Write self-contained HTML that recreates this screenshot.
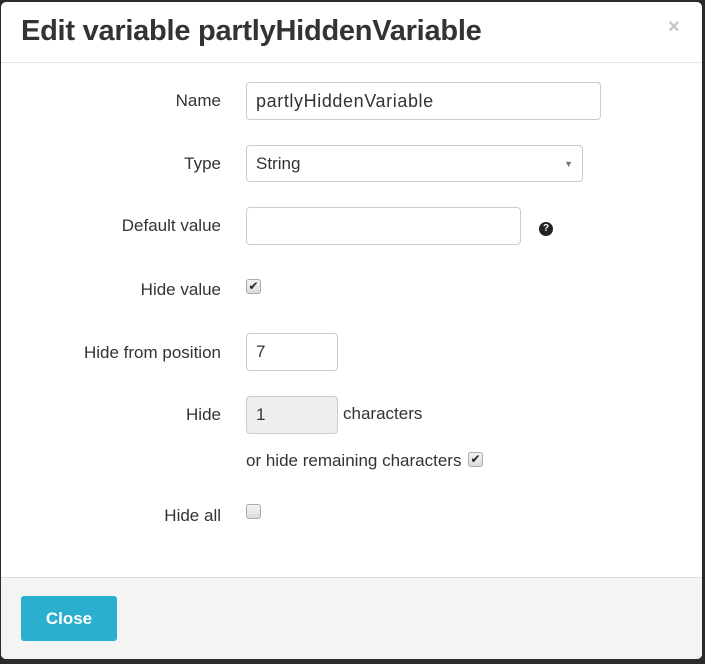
<!DOCTYPE html>
<html><head><style>
*{box-sizing:border-box;margin:0;padding:0}
body{width:705px;height:664px;background:#2b2b2b;font-family:"Liberation Sans",sans-serif;color:#333;position:relative;overflow:hidden}
.modal{position:absolute;left:1px;top:2px;width:701px;height:657px;background:#fff;border-radius:5px;overflow:hidden}
.abs{position:absolute}
.title{left:20px;top:13px;font-size:29px;font-weight:bold;color:#333;letter-spacing:-0.25px}
.x{left:667px;top:14px;font-size:20px;color:#c4c4c4;font-weight:bold}
.hr{left:0;top:60px;width:701px;height:1px;background:#e5e5e5}
.lab{font-size:17px;text-align:right;width:220px;left:0}
.inp{border:1px solid #ccc;border-radius:4px;background:#fff;font-size:16px;padding:0 9px;display:flex;align-items:center}
.cb{width:15px;height:15px;border:1px solid #aaa;border-radius:3px;background:linear-gradient(#f4f4f4,#dcdcdc);font-size:12px;line-height:13px;text-align:center;color:#222}
.foot{left:0;top:575px;width:701px;height:82px;background:#f4f4f4;border-top:1px solid #ddd}
.btn{left:20px;top:594px;width:96px;height:45px;background:#2aafcf;border-radius:3px;color:#fff;font-weight:bold;font-size:17px;text-align:center;line-height:45px}
</style></head><body>
<div class="modal">
<div class="abs title">Edit variable partlyHiddenVariable</div>
<div class="abs x">×</div>
<div class="abs hr"></div>
<div class="abs lab" style="top:89px">Name</div>
<div class="abs inp" style="left:245px;top:80px;width:355px;height:38px;font-size:18px;letter-spacing:0.6px">partlyHiddenVariable</div>
<div class="abs lab" style="top:152px">Type</div>
<div class="abs inp" style="left:245px;top:143px;width:337px;height:37px;font-size:17px">String<span style="position:absolute;right:9px;top:13px;font-size:9px;color:#777">▼</span></div>
<div class="abs lab" style="top:214px">Default value</div>
<div class="abs inp" style="left:245px;top:205px;width:275px;height:38px"></div>
<div class="abs" style="left:538px;top:220px;width:14px;height:14px;border-radius:50%;background:#222;color:#fff;font-size:10px;font-weight:bold;text-align:center;line-height:14px">?</div>
<div class="abs lab" style="top:278px">Hide value</div>
<div class="abs cb" style="left:245px;top:277px">✔</div>
<div class="abs lab" style="top:341px">Hide from position</div>
<div class="abs inp" style="left:245px;top:331px;width:92px;height:38px;font-size:17px">7</div>
<div class="abs lab" style="top:403px">Hide</div>
<div class="abs inp" style="left:245px;top:394px;width:92px;height:38px;background:#eee;font-size:17px">1</div>
<div class="abs" style="left:342px;top:402px;font-size:17px">characters</div>
<div class="abs" style="left:245px;top:449px;font-size:17px">or hide remaining characters</div>
<div class="abs cb" style="left:467px;top:450px">✔</div>
<div class="abs lab" style="top:504px">Hide all</div>
<div class="abs cb" style="left:245px;top:502px"></div>
<div class="abs foot"></div>
<div class="abs btn">Close</div>
</div>
</body></html>
